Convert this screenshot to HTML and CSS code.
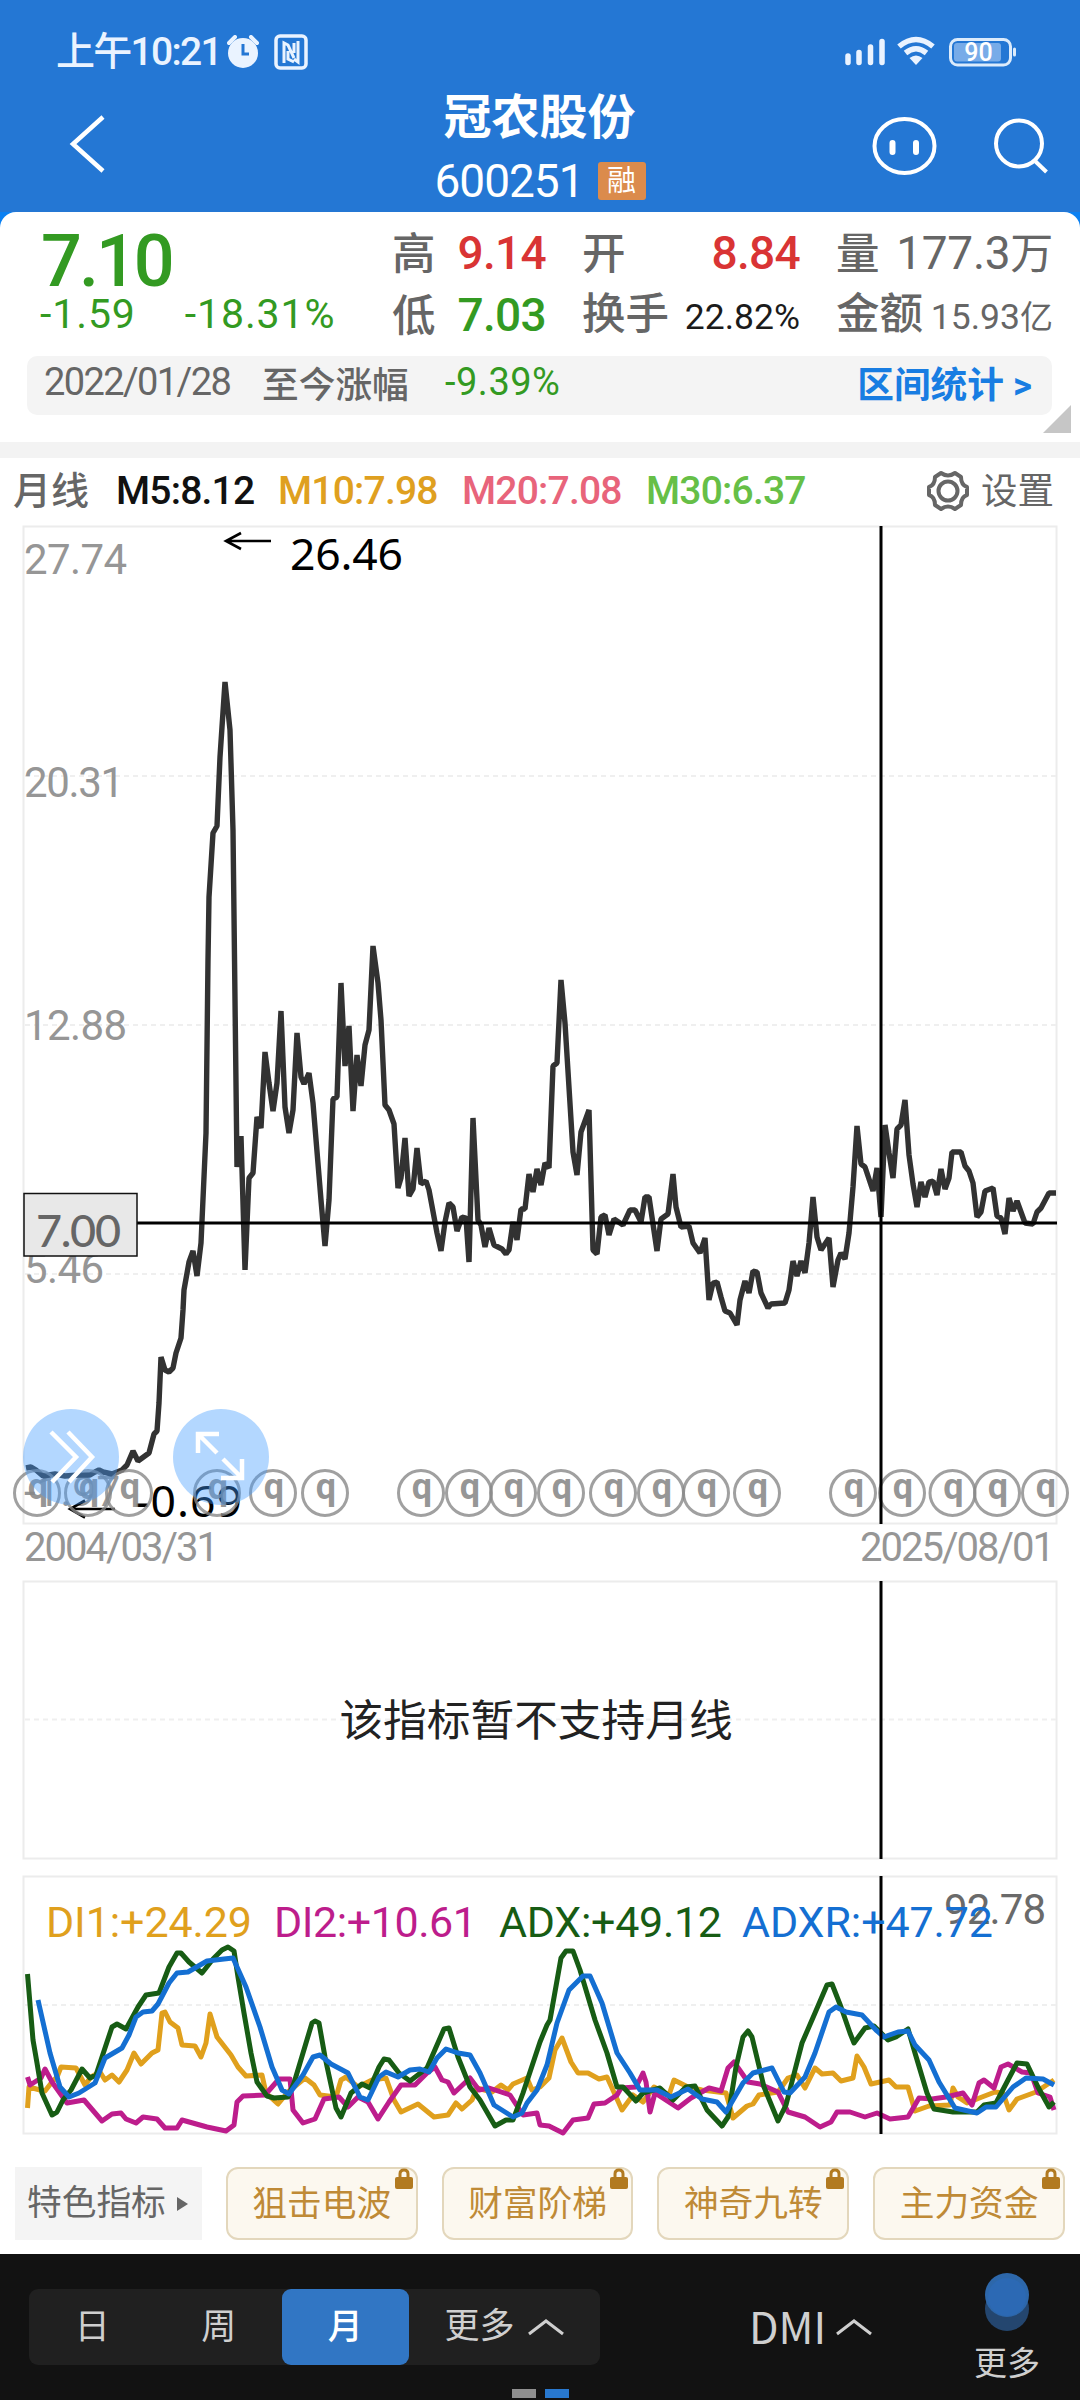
FILE: index.html
```html
<!DOCTYPE html>
<html lang="zh-CN">

<head>
    <meta charset="UTF-8">
    <meta name="viewport" content="width=device-width, initial-scale=1.0">
    <title>冠农股份 600251</title>
    <link rel="stylesheet" href="styles.css">
</head>

<body>

    <header class="top">
        <div class="status-bar">
            <span class="status-time">上午10:21</span>
            <svg class="icon-alarm" width="32" height="34" viewBox="0 0 32 34">
                <circle cx="16" cy="18" r="15" fill="#eaf3ff" />
                <path d="M2 8 L8 2 M30 8 L24 2" stroke="#eaf3ff" stroke-width="4" stroke-linecap="round" />
                <path d="M16 9 V19 H22" fill="none" stroke="#2477d4" stroke-width="3" />
            </svg>
            <svg class="icon-nfc" width="34" height="36" viewBox="0 0 34 36">
                <rect x="2" y="2" width="30" height="32" rx="4" fill="none" stroke="#eaf3ff" stroke-width="3.5" />
                <path d="M10 29 V9 L14 11 L20 24 M14 17 V25 L20 28 M20 19 V9 M24 7 V28 L20 25" fill="none" stroke="#eaf3ff" stroke-width="3" />
            </svg>
            <svg class="icon-system" width="176" height="32" viewBox="844 36 176 32">
                <path d="M848 62.500 V56 M859 62.500 V52.500 M870.500 62.500 V47 M882 62.500 V41.500" stroke="#eaf3ff" stroke-width="5.500" stroke-linecap="round" />
                <path d="M899 46.500 Q916 32.500 933 46.500 M905.500 53 Q916 44.500 926.500 53" fill="none" stroke="#eaf3ff" stroke-width="5.500" />
                <path d="M909.500 58 Q916 53 922.500 58 L916 65 Z" fill="#eaf3ff" />
                <rect x="950.500" y="39.500" width="60" height="25.500" rx="7" fill="none" stroke="#dcebfb" stroke-width="3" />
                <rect x="954" y="43" width="47" height="18.500" rx="3" fill="#77abe8" />
                <path d="M1014.500 49 V55" stroke="#dcebfb" stroke-width="3" stroke-linecap="round" />
                <text class="battery-text" x="978.500" y="61">90</text>
            </svg>
        </div>
        <div class="nav-bar">
            <svg class="nav-back" width="40" height="64" viewBox="68 112 40 64">
                <path d="M103 117 L73 144 L103 171" fill="none" stroke="#fff" stroke-width="4.500" />
            </svg>
            <div class="nav-title">
                <h1>冠农股份</h1>
                <p>600251<span class="tag">融</span></p>
            </div>
            <svg class="nav-actions" width="180" height="64" viewBox="870 114 180 64">
                <ellipse cx="904.500" cy="146" rx="30" ry="27" fill="none" stroke="#fff" stroke-width="4" />
                <path d="M892.500 143 V152 M916 143 V152" stroke="#fff" stroke-width="6" stroke-linecap="round" />
                <circle cx="1019" cy="143.500" r="23" fill="none" stroke="#fff" stroke-width="4" />
                <path d="M1034 160 L1046.500 172" stroke="#fff" stroke-width="4" />
            </svg>
        </div>
    </header>

    <section class="quote">
        <div class="quote-main">
            <div class="price">
                <p class="price-now">7.10</p>
                <p class="price-change"><span>-1.59</span><span>-18.31%</span></p>
            </div>
            <div class="stats">
                <div class="stat"><span>高</span><b class="up">9.14</b></div>
                <div class="stat"><span>开</span><b class="up">8.84</b></div>
                <div class="stat"><span>量</span><b class="volume">177.3<i>万</i></b></div>
                <div class="stat"><span>低</span><b class="down">7.03</b></div>
                <div class="stat"><span>换手</span><b class="small dark">22.82%</b></div>
                <div class="stat"><span>金额</span><b class="small">15.93<i>亿</i></b></div>
            </div>
        </div>
        <div class="range">
            <span class="range-date">2022/01/28</span>
            <span class="range-name">至今涨幅</span>
            <span class="range-value">-9.39%</span>
            <a class="range-link">区间统计 &gt;</a>
        </div>
        <div class="corner"></div>
    </section>

    <section class="ma-row">
        <span class="ma-name">月线</span>
        <span class="m5">M5:8.12</span>
        <span class="m10">M10:7.98</span>
        <span class="m20">M20:7.08</span>
        <span class="m30">M30:6.37</span>
        <svg class="gear" width="44" height="44" viewBox="0 0 44 44">
            <path d="M15 4 Q22 9 29 4 L35 8 Q35 16 41 18 L41 26 Q35 28 35 36 L29 40 Q22 35 15 40 L9 36 Q9 28 3 26 L3 18 Q9 16 9 8 Z" />
            <circle cx="22" cy="22" r="9.500" />
        </svg>
        <span class="settings">设置</span>
    </section>

    <!-- 主图 -->
    <svg class="chart" width="1080" height="1056" viewBox="0 520 1080 1056">
        <rect class="frame" x="23.500" y="526.500" width="1033" height="997" />
        <path class="grid" d="M25 776 H1056 M25 1025 H1056 M25 1274 H1056" />
        <g class="axis">
            <text x="24" y="574" textLength="103">27.74</text>
            <text x="24" y="797" textLength="100">20.31</text>
            <text x="24" y="1040" textLength="103">12.88</text>
            <text x="24" y="1283" textLength="80">5.46</text>
            <text x="24" y="1506" textLength="96">-1.97</text>
            <text class="date" x="24" y="1561" textLength="195">2004/03/31</text>
            <text class="date" x="860" y="1561" textLength="195">2025/08/01</text>
        </g>
        <polyline class="price-line" points="26,1468 31,1467 36,1470 43,1476 55,1474 65,1476 79,1475 90,1475 95,1472 99,1470 103,1472 112,1474 122,1470 127,1465 133,1451 138,1461 149,1453 154,1434 157,1431 159,1403 161,1357 165,1370 169,1372 173,1368 176,1353 181,1338 183,1310 184,1290 189,1262 193,1251 197,1276 201,1243 206,1133 208,960 209,897 213,833 217,826 220,757 225,682 230,730 233,830 235,1000 237,1167 241,1136 245,1270 249,1178 253,1173 257,1117 261,1128 265,1052 269,1083 273,1111 277,1083 281,1011 285,1107 289,1133 293,1110 297,1033 301,1077 304,1084 309,1073 313,1103 321,1200 325,1246 329,1200 333,1099 337,1097 341,983 345,1066 349,1026 353,1111 357,1055 361,1086 365,1045 369,1030 373,946 378,983 381,1020 385,1105 389,1110 394,1124 398,1188 401,1178 405,1138 409,1196 413,1189 417,1148 421,1184 426,1181 429,1190 437,1233 441,1251 445,1222 449,1203 453,1207 457,1231 462,1217 466,1218 469,1262 473,1118 478,1220 481,1225 485,1247 489,1228 494,1245 502,1249 506,1254 509,1250 513,1222 517,1240 521,1209 525,1209 529,1174 533,1192 537,1169 541,1185 545,1163 549,1168 553,1066 557,1063 561,980 565,1023 573,1152 577,1175 581,1132 589,1110 593,1250 597,1254 601,1217 605,1215 609,1235 614,1219 623,1225 630,1210 635,1210 641,1222 645,1197 649,1197 657,1251 661,1219 668,1214 673,1174 676,1207 681,1227 689,1226 693,1243 700,1253 705,1238 709,1300 713,1283 717,1282 721,1297 725,1311 730,1313 737,1325 740,1300 745,1281 749,1293 753,1271 757,1272 761,1293 768,1308 771,1304 785,1303 789,1290 793,1261 797,1276 801,1261 805,1273 809,1243 813,1197 817,1237 821,1250 829,1238 833,1287 838,1260 841,1253 845,1259 849,1233 853,1187 857,1126 861,1164 865,1167 873,1191 877,1168 881,1217 885,1125 889,1153 893,1178 897,1129 901,1125 905,1100 909,1155 913,1184 917,1207 921,1182 925,1197 929,1182 933,1181 937,1195 941,1169 945,1189 949,1178 952,1152 961,1152 965,1166 969,1171 973,1183 977,1217 981,1212 985,1191 993,1188 997,1216 1001,1218 1005,1234 1009,1198 1013,1211 1017,1201 1025,1223 1033,1224 1037,1212 1041,1208 1049,1193 1056,1193" />
        <path class="arrow" d="M271 541 H226 M241 533 L226 541 L241 549" />
        <text class="extreme" x="290" y="570" textLength="113">26.46</text>
        <path class="arrow" d="M115 1509 H70 M85 1500.500 L70 1509 L85 1517.500" />
        <text class="extreme" x="135" y="1517" textLength="107">-0.69</text>

        <!-- 除权标记 -->
        <g class="marks">
            <circle cx="37" cy="1493" r="22.500" /><text x="38" y="1499">q</text>
            <circle cx="88" cy="1493" r="22.500" /><text x="89" y="1499">q</text>
            <circle cx="129" cy="1493" r="22.500" /><text x="130" y="1499">q</text>
            <circle cx="217" cy="1493" r="22.500" /><text x="218" y="1499">q</text>
            <circle cx="273" cy="1493" r="22.500" /><text x="274" y="1499">q</text>
            <circle cx="325" cy="1493" r="22.500" /><text x="326" y="1499">q</text>
            <circle cx="421" cy="1493" r="22.500" /><text x="422" y="1499">q</text>
            <circle cx="469" cy="1493" r="22.500" /><text x="470" y="1499">q</text>
            <circle cx="513" cy="1493" r="22.500" /><text x="514" y="1499">q</text>
            <circle cx="561" cy="1493" r="22.500" /><text x="562" y="1499">q</text>
            <circle cx="613" cy="1493" r="22.500" /><text x="614" y="1499">q</text>
            <circle cx="661" cy="1493" r="22.500" /><text x="662" y="1499">q</text>
            <circle cx="706" cy="1493" r="22.500" /><text x="707" y="1499">q</text>
            <circle cx="757" cy="1493" r="22.500" /><text x="758" y="1499">q</text>
            <circle cx="853" cy="1493" r="22.500" /><text x="854" y="1499">q</text>
            <circle cx="902" cy="1493" r="22.500" /><text x="903" y="1499">q</text>
            <circle cx="952.500" cy="1493" r="22.500" /><text x="953.500" y="1499">q</text>
            <circle cx="997" cy="1493" r="22.500" /><text x="998" y="1499">q</text>
            <circle cx="1045" cy="1493" r="22.500" /><text x="1046" y="1499">q</text>
        </g>

        <circle class="fab" cx="71" cy="1457" r="48" />
        <circle class="fab" cx="221" cy="1457" r="48" />
        <path class="fab-icon" d="M51 1432 L76 1457 L52 1482 M68 1432 L92 1457 L69 1482" />
        <path class="fab-icon" d="M219 1434 H198 V1453 M198 1434 L217 1453 M221 1478 H242 V1459 M242 1478 L223 1459" />

        <!-- 十字光标 -->
        <path class="cursor" d="M881 526 V1524 M137 1223 H1057" />
        <rect class="cursor-box" x="24" y="1193.500" width="113" height="62.500" />
        <text class="cursor-text" x="36" y="1246.500" textLength="85">7.00</text>
    </svg>

    <svg class="chart" width="1080" height="296" viewBox="0 1576 1080 296">
        <rect class="frame" x="23.500" y="1581.500" width="1033" height="277" />
        <path class="grid" d="M25 1719.500 H1056" />
        <path class="cursor" d="M881 1581 V1859" />
        <text class="notice" x="536" y="1736">该指标暂不支持月线</text>
    </svg>

    <!-- DMI -->
    <svg class="chart" width="1080" height="276" viewBox="0 1872 1080 276">
        <rect class="frame" x="23.500" y="1876.500" width="1033" height="257" />
        <path class="grid" d="M25 2005 H1056" />
        <text class="dmi-max" x="944" y="1924" textLength="102">92.78</text>
        <polyline class="line di1" points="27.500,2108 29,2087 40,2090 45,2091 52,2082 57,2077 61,2067 76,2068 85,2085 91,2077 100,2072 105,2080 112,2075 119,2082 127,2070 134,2053 141,2064 152,2053 158,2050 162,2013 165,2012 170,2022 178,2028 182,2045 195,2046 201,2057 206,2043 210,2014 217,2037 231,2055 238,2067 246,2076 262,2075 266,2093 278,2104 288,2092 305,2078 314,2085 320,2095 336,2097 341,2080 346,2077 358,2087 372,2080 386,2078 394,2100 401,2112 418,2104 434,2117 448,2115 456,2103 462,2109 472,2100 477,2088 492,2092 501,2085 508,2090 513,2084 527,2078 532,2090 540,2087 549,2078 555,2050 562,2038 571,2062 578,2073 588,2073 599,2079 607,2077 622,2110 633,2095 643,2102 654,2087 669,2095 674,2080 688,2087 702,2090 726,2093 733,2118 747,2106 753,2104 759,2095 778,2092 788,2078 797,2075 805,2088 815,2068 822,2074 833,2073 841,2081 853,2078 857,2056 864,2067 871,2084 889,2080 896,2087 908,2087 915,2111 929,2106 950,2105 953,2088 958,2097 967,2103 982,2097 995,2092 1003,2093 1009,2110 1017,2099 1036,2092 1054,2080" />
        <polyline class="line di2" points="27.500,2077 30,2085 41,2078 45,2069 52,2082 67,2103 84,2100 102,2121 112,2114 121,2113 126,2119 136,2123 143,2117 157,2119 165,2128 177,2128 182,2120 207,2127 226,2131 234,2125 237,2102 243,2096 265,2095 279,2079 290,2079 293,2110 303,2123 315,2119 324,2099 339,2097 348,2107 358,2097 368,2102 378,2119 389,2102 401,2085 415,2085 427,2073 435,2067 442,2080 448,2082 454,2093 470,2078 479,2090 489,2088 510,2095 523,2115 537,2113 540,2125 549,2126 563,2133 573,2120 588,2118 594,2104 605,2103 617,2095 621,2088 636,2087 643,2073 646,2082 650,2112 655,2093 678,2108 691,2098 709,2088 721,2091 728,2068 734,2062 748,2082 760,2084 778,2092 788,2112 805,2117 820,2127 831,2122 837,2112 850,2112 865,2117 877,2113 890,2119 908,2117 919,2098 932,2099 946,2097 963,2093 972,2105 979,2083 984,2080 994,2088 1001,2067 1008,2064 1022,2072 1031,2073 1038,2093 1050,2097 1054,2110" />
        <polyline class="line adx" points="27.500,1974 33,2040 37,2063 42,2093 52,2115 57,2112 63,2100 71,2090 82,2069 90,2078 96,2075 102,2057 112,2027 117,2024 126,2029 138,2007 146,1995 159,1993 169,1967 177,1953 181,1953 189,1962 202,1973 213,1959 222,1950 228,1947 234,1951 238,1977 244,2013 251,2053 257,2082 267,2096 274,2098 288,2097 294,2083 312,2023 315,2021 319,2023 325,2057 336,2108 341,2117 351,2093 362,2084 370,2088 379,2067 384,2059 389,2060 399,2073 410,2081 427,2068 437,2045 444,2029 449,2028 458,2057 470,2087 480,2100 495,2126 506,2120 513,2120 523,2093 534,2060 540,2042 547,2025 550,2020 561,1958 566,1951 573,1951 580,1970 595,2020 607,2053 617,2087 623,2087 636,2101 643,2093 660,2088 673,2100 686,2087 695,2086 707,2110 722,2126 728,2117 736,2067 743,2037 748,2031 752,2037 764,2087 778,2121 786,2105 795,2070 802,2043 815,2013 827,1985 832,1984 841,2007 850,2033 854,2043 865,2028 874,2026 888,2040 896,2037 908,2029 915,2053 927,2093 934,2109 953,2112 977,2112 984,2105 996,2103 1008,2080 1017,2063 1027,2064 1038,2087 1049,2107 1054,2102" />
        <polyline class="line adxr" points="38,2000 50,2053 60,2087 69,2097 79,2093 95,2083 105,2058 122,2048 129,2035 136,2017 143,2012 152,2011 158,2004 169,1983 177,1973 188,1972 207,1961 224,1959 233,1958 246,1987 260,2027 272,2067 282,2090 289,2094 303,2075 313,2057 320,2055 331,2064 348,2073 360,2097 368,2100 379,2077 386,2072 398,2077 410,2070 420,2069 429,2072 437,2058 446,2049 458,2053 470,2055 480,2073 494,2105 513,2117 522,2113 527,2103 537,2090 547,2065 557,2023 569,1990 583,1976 590,1976 602,2003 617,2053 630,2073 640,2090 657,2090 671,2097 688,2089 702,2099 717,2102 726,2112 743,2083 753,2073 772,2068 784,2092 790,2093 805,2077 815,2053 829,2012 836,2007 846,2012 862,2015 876,2030 884,2037 898,2032 908,2031 915,2045 929,2060 939,2082 955,2108 977,2113 986,2107 996,2107 1013,2087 1026,2078 1043,2079 1054,2085" />
        <path class="cursor" d="M881 1876 V2134" />
        <g class="dmi-text">
            <text fill="#e0a01d" x="46" y="1937" textLength="206">DI1:+24.29</text>
            <text fill="#bd1d8c" x="274" y="1937" textLength="203">DI2:+10.61</text>
            <text fill="#175c14" x="499" y="1937" textLength="223">ADX:+49.12</text>
            <text fill="#146fd2" x="742" y="1937" textLength="251">ADXR:+47.72</text>
        </g>
    </svg>

    <section class="features">
        <div class="feature-label">特色指标<i></i></div>
        <div class="feature">狙击电波<svg width="18" height="22" viewBox="0 0 18 22"><path d="M5 10 V6 Q5 2 9 2 Q13 2 13 6 V10" /><rect y="9" width="18" height="12" rx="2" /></svg></div>
        <div class="feature">财富阶梯<svg width="18" height="22" viewBox="0 0 18 22"><path d="M5 10 V6 Q5 2 9 2 Q13 2 13 6 V10" /><rect y="9" width="18" height="12" rx="2" /></svg></div>
        <div class="feature">神奇九转<svg width="18" height="22" viewBox="0 0 18 22"><path d="M5 10 V6 Q5 2 9 2 Q13 2 13 6 V10" /><rect y="9" width="18" height="12" rx="2" /></svg></div>
        <div class="feature">主力资金<svg width="18" height="22" viewBox="0 0 18 22"><path d="M5 10 V6 Q5 2 9 2 Q13 2 13 6 V10" /><rect y="9" width="18" height="12" rx="2" /></svg></div>
    </section>

    <footer class="bottom">
        <div class="period">
            <span>日</span>
            <span>周</span>
            <span class="active">月</span>
            <span class="period-more">更多<svg width="36" height="18" viewBox="0 0 36 18"><path d="M1 16 L18 3 L35 16" /></svg></span>
        </div>
        <div class="dmi"><span>DMI</span><svg width="36" height="18" viewBox="0 0 36 18"><path d="M1 16 L18 3 L35 16" /></svg></div>
        <div class="more">
            <svg width="46" height="60" viewBox="0 0 46 60">
                <circle cx="23" cy="37" r="22" fill="#24466f" />
                <circle cx="23" cy="23" r="22" fill="#2d67aa" />
                <circle cx="23" cy="25" r="19" fill="#2c69b4" />
            </svg>
            <span>更多</span>
        </div>
        <div class="pager"><i></i><i class="on"></i></div>
    </footer>

</body>

</html>
```

FILE: styles.css
```css
* {
    box-sizing: border-box;
    margin: 0;
    padding: 0;
}

body {
    width: 1080px;
    height: 2400px;
    overflow: hidden;
    background: #fff;
    color: #666;
    font-family: Roboto, "Noto Sans CJK SC", sans-serif;
}

i,
b {
    font-style: normal;
    font-weight: inherit;
}

svg {
    display: block;
    flex: none;
}

/* 顶部 */
.top {
    height: 228px;
    margin-bottom: -16px;
    background: linear-gradient(#2477d4 212px, #0a80f2 212px);
    color: #fff;
}

.status-bar {
    height: 84px;
    padding: 20px 60px 0 56px;
    display: flex;
    align-items: center;
    color: #eaf3ff;
}

.status-time {
    width: 171px;
    font-size: 39px;
    line-height: 64px;
    font-weight: 500;
    letter-spacing: -1.7px;
    white-space: nowrap;
}

.icon-nfc {
    margin-left: 15px;
}

.icon-system {
    margin-left: auto;
}

.battery-text {
    font-size: 25px;
    font-weight: 500;
    fill: #fff;
    text-anchor: middle;
}

.nav-bar {
    height: 128px;
    padding: 0 30px 0 68px;
    display: flex;
}

.nav-back {
    margin-top: 28px;
}

.nav-actions {
    margin: 30px 0 0 auto;
}

.nav-title {
    width: 216px;
    margin-left: 324px;
    text-align: center;
}

.nav-title h1 {
    margin-left: -1px;
    margin-top: 1px;
    font-size: 48px;
    font-weight: 700;
    line-height: 66px;
    white-space: nowrap;
}

.nav-title p {
    display: flex;
    align-items: center;
    justify-content: center;
    font-size: 46px;
    line-height: 60px;
    letter-spacing: -1px;
}

.tag {
    width: 48px;
    height: 38px;
    margin-left: 14px;
    background: #db8b4c;
    border-radius: 3px;
    font-size: 29px;
    line-height: 38px;
    letter-spacing: 0;
}

/* 行情 */
.quote {
    position: relative;
    height: 246px;
    border-bottom: 16px solid #f3f3f3;
    border-radius: 16px 16px 0 0;
    background: #fff;
}

.quote-main {
    height: 144px;
    display: flex;
}

.price {
    width: 393px;
    padding: 18px 0 0 41px;
    color: #339a22;
}

.price-now {
    font-size: 72px;
    line-height: 64px;
    font-weight: 500;
    letter-spacing: -3px;
}

.price-change {
    margin-left: -1px;
    display: flex;
    gap: 49px;
    font-size: 41px;
    line-height: 40px;
    letter-spacing: .9px;
}

.stats {
    width: 660px;
    padding-top: 10px;
    display: grid;
    grid-template-columns: 153px 217px 216px;
    grid-template-rows: 62px 62px;
    column-gap: 37px;
}

.stat {
    display: flex;
    align-items: baseline;
    justify-content: space-between;
    font-size: 46px;
    line-height: 62px;
    white-space: nowrap;
}

.stat span {
    margin-left: -1px;
    font-size: 43.5px;
    font-weight: 500;
}

.stat .up,
.stat .down {
    font-weight: 500;
    letter-spacing: -.7px;
}

.up {
    color: #d93434;
}

.down {
    color: #339a22;
}

.stat .volume {
    letter-spacing: -.3px;
}

.stat .small {
    font-size: 35.5px;
}

.stat .volume i {
    font-size: 43px;
}

.stat .small i {
    font-size: 33px;
}

.stat .dark {
    color: #1b1b1b;
}

.range {
    height: 59px;
    margin: 0 28px 0 27px;
    padding: 0 20px 7px 17px;
    display: flex;
    align-items: center;
    border-radius: 10px;
    background: #f4f4f4;
    font-size: 38px;
}

.range-date {
    width: 218px;
    letter-spacing: -1.6px;
}

.range-name {
    width: 183px;
    font-size: 36.7px;
    font-weight: 500;
}

.range-value {
    color: #339a22;
    letter-spacing: .5px;
}

.range-link {
    margin-left: auto;
    color: #187de2;
    font-size: 36.7px;
    font-weight: 700;
}

.corner {
    width: 28px;
    height: 28px;
    margin: -10px 9px 0 auto;
    background: #c6c6c6;
    clip-path: polygon(100% 0, 100% 100%, 0 100%);
}

/* 均线 */
.ma-row {
    height: 62px;
    padding: 3px 26px 0 13px;
    display: flex;
    align-items: center;
    font-size: 39px;
    font-weight: 500;
    line-height: 60px;
    letter-spacing: -.8px;
    white-space: nowrap;
}

.ma-name {
    width: 103px;
    font-size: 38px;
    letter-spacing: 0;
}

.m5 {
    width: 162px;
    color: #111;
}

.m10 {
    width: 184px;
    color: #dfa01f;
}

.m20 {
    width: 184px;
    color: #e8647b;
}

.m30 {
    color: #66bf47;
}

.gear {
    margin-left: auto;
    fill: none;
    stroke: #666;
    stroke-width: 4;
    stroke-linejoin: round;
}

.settings {
    margin-left: 11px;
    padding-top: 2px;
    font-size: 36.5px;
    font-weight: 400;
    letter-spacing: 0;
}

/* 图表 */
.frame {
    fill: none;
    stroke: #ececec;
    stroke-width: 2;
}

.grid {
    stroke: #efefef;
    stroke-width: 2;
    stroke-dasharray: 5 4;
}

.axis text {
    fill: #969696;
    font-size: 42px;
}

.axis .date {
    font-size: 40px;
}

.price-line {
    fill: none;
    stroke: #323232;
    stroke-width: 5.4;
    stroke-linejoin: bevel;
}

.arrow {
    fill: none;
    stroke: #000;
    stroke-width: 2.6;
}

.extreme {
    fill: #000;
    font-family: "Noto Sans", sans-serif;
    font-size: 44.5px;
}

.marks circle {
    fill: none;
    stroke: #888;
    stroke-opacity: .8;
    stroke-width: 3;
}

.marks text {
    fill: #888;
    fill-opacity: .9;
    font-size: 36px;
    font-weight: 700;
    text-anchor: middle;
}

.fab {
    fill: #409bff;
    fill-opacity: .4;
}

.fab-icon {
    fill: none;
    stroke: #fff;
    stroke-width: 4.5;
}

.cursor {
    stroke: #000;
    stroke-width: 3;
}

.cursor-box {
    fill: #e8e8e8;
    stroke: #111;
    stroke-width: 1.5;
}

.cursor-text {
    fill: #666;
    font-family: Lato, sans-serif;
    font-size: 45px;
    font-weight: 500;
}

.notice {
    fill: #222;
    font-size: 43.7px;
    text-anchor: middle;
}

.line {
    fill: none;
    stroke-width: 5;
    stroke-linejoin: round;
}

.di1 {
    stroke: #e0a01d;
}

.di2 {
    stroke: #bd1d8c;
}

.adx {
    stroke: #175c14;
}

.adxr {
    stroke: #146fd2;
}

.dmi-max {
    fill: #6a6a6a;
    font-size: 42px;
}

.dmi-text text {
    font-size: 43px;
}

/* 特色指标 */
.features {
    height: 106px;
    padding: 19px 15px 0;
    display: flex;
    gap: 24px;
    font-size: 34.7px;
    line-height: 71px;
}

.feature-label {
    width: 187px;
    height: 73px;
    padding-left: 12px;
    display: flex;
    align-items: center;
    background: #f4f4f4;
    white-space: nowrap;
}

.feature-label i {
    margin-left: 11px;
    border-left: 11px solid #666;
    border-top: 7px solid transparent;
    border-bottom: 7px solid transparent;
}

.feature {
    position: relative;
    width: 192px;
    height: 73px;
    border: 2px solid #e3d7bc;
    border-radius: 12px;
    background: #fcf8ef;
    color: #bf8a36;
    text-align: center;
}

.feature svg {
    position: absolute;
    top: -1px;
    right: 3px;
    fill: #b27a20;
}

.feature path {
    fill: none;
    stroke: #b27a20;
    stroke-width: 3;
}

/* 底部 */
.bottom {
    position: relative;
    height: 146px;
    padding: 35px 41px 0 29px;
    display: flex;
    align-items: flex-start;
    background: #121212;
    color: #cfcfcf;
    font-size: 35px;
}

.bottom path {
    fill: none;
    stroke: #cfcfcf;
    stroke-width: 3;
}

.period {
    width: 571px;
    height: 76px;
    display: flex;
    border-radius: 9px;
    background: #202020;
    line-height: 78px;
}

.period span {
    width: 126.5px;
    text-align: center;
}

.period .active {
    border-radius: 9px;
    background: #3176c4;
    color: #fff;
    font-weight: 500;
}

.period .period-more {
    width: auto;
    margin-left: 36px;
    display: flex;
    align-items: center;
    gap: 13px;
}

.dmi {
    margin-left: 149px;
    height: 76px;
    display: flex;
    align-items: center;
    gap: 10px;
    font-family: "Noto Sans CJK SC", sans-serif;
    font-size: 43px;
    line-height: 72px;
}

.dmi span {
    margin-top: -4px;
}

.more {
    margin: -17px -1px 0 auto;
    display: flex;
    flex-direction: column;
    align-items: center;
    font-size: 33px;
    line-height: 64px;
}

.pager {
    position: absolute;
    left: 512px;
    bottom: 2px;
    display: flex;
    gap: 9px;
}

.pager i {
    width: 24px;
    height: 9px;
    background: #8f8f8f;
}

.pager .on {
    background: #2878cf;
}
```
